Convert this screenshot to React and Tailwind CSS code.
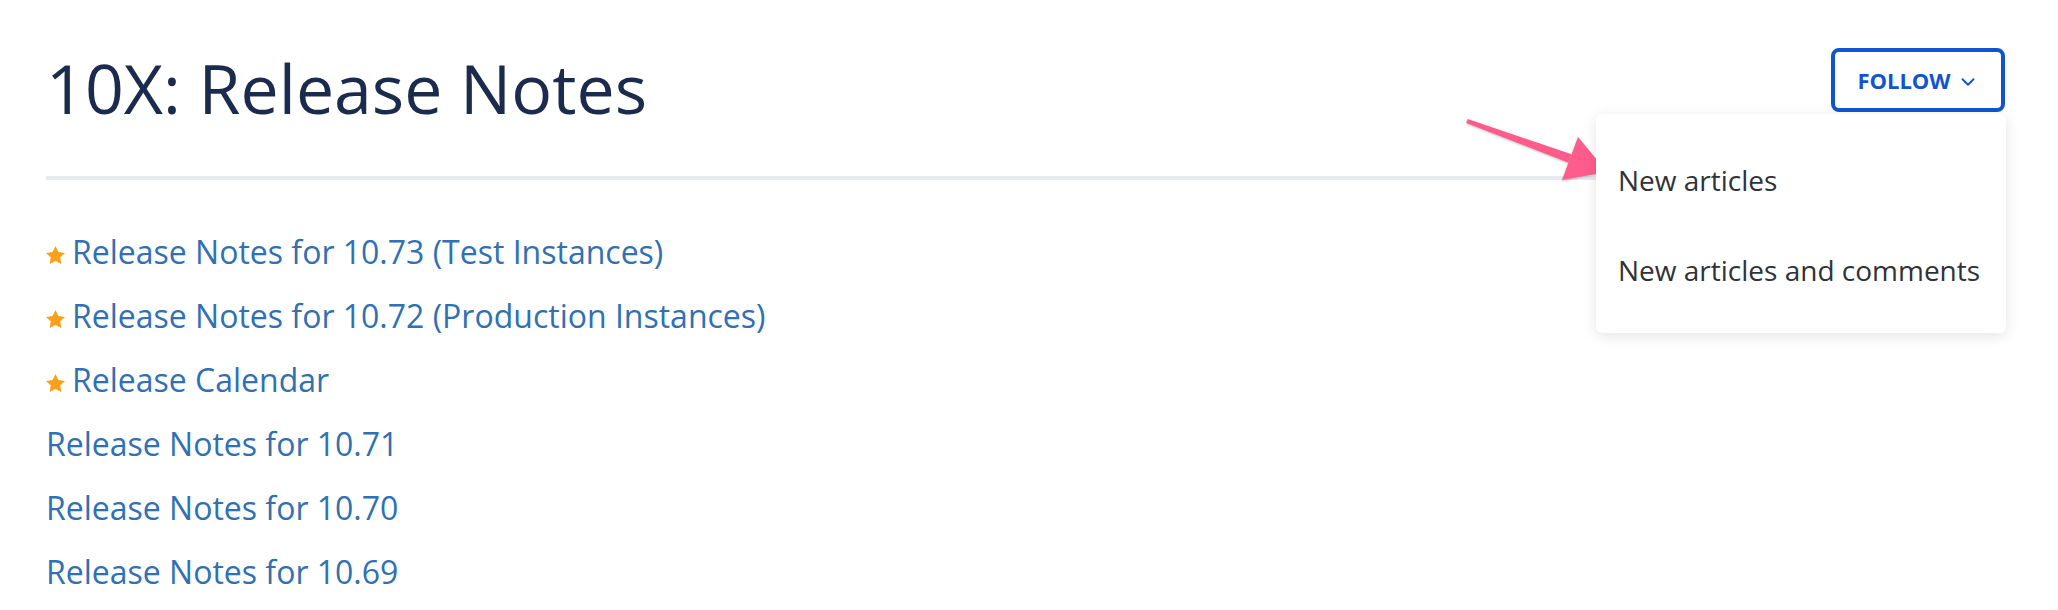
import { ChevronDown } from 'lucide-react';

const links = [
  { title: 'Release Notes for 10.73 (Test Instances)', promoted: true },
  { title: 'Release Notes for 10.72 (Production Instances)', promoted: true },
  { title: 'Release Calendar', promoted: true },
  { title: 'Release Notes for 10.71' },
  { title: 'Release Notes for 10.70' },
  { title: 'Release Notes for 10.69' },
];

function Star() {
  return (
    <svg
      viewBox="2 2 20 19"
      width="19"
      height="18"
      className="inline-block align-baseline mr-[7px]"
      fill="#f9a11b"
    >
      <path d="M12 2l3.09 6.26L22 9.27l-5 4.87 1.18 6.88L12 17.77l-6.18 3.25L7 14.14 2 9.27l6.91-1.01L12 2z" />
    </svg>
  );
}

function PinkArrow() {
  return (
    <svg
      width="160"
      height="80"
      viewBox="0 0 160 80"
      className="absolute left-[1460px] top-[110px] pointer-events-none"
    >
      <g fill="#ff5c8d" style={{ filter: 'drop-shadow(0 1px 1px rgba(0,0,0,0.25))' }}>
        <polygon points="7.7,9.1 111.5,44.3 108.5,52.7 6.3,12.9" />
        <polygon points="118,27 147,62 102,70" />
      </g>
    </svg>
  );
}

function FollowMenu() {
  return (
    <div className="relative mt-[1px]">
      <button className="w-[174px] h-[64px] flex items-center justify-center gap-[6px] border-[4px] border-[#0f55cf] rounded-[8px] bg-white text-[#0f55cf] font-bold text-[22px] leading-none">
        FOLLOW
        <ChevronDown size={22} strokeWidth={2} className="mt-[3px]" />
      </button>
      <div className="absolute right-[-1px] top-[66px] w-[410px] bg-white rounded-[6px] shadow-[0_3px_14px_rgba(0,0,0,0.11)] pt-[21px] pb-[18px] z-10">
        <div className="h-[90px] flex items-center pl-[22px] text-[28px] text-[#2f3337]">
          New articles
        </div>
        <div className="h-[90px] flex items-center pl-[22px] text-[28px] text-[#2f3337]">
          New articles and comments
        </div>
      </div>
    </div>
  );
}

export default function App() {
  return (
    <div className="relative min-h-[610px] bg-white font-['Open_Sans',sans-serif] pl-[46px] pr-[53px] pt-[47px]">
      <div className="flex items-start justify-between">
        <h1 className="text-[68px] leading-[82px] text-[#1b2b4d] font-normal">
          10X: Release Notes
        </h1>
        <FollowMenu />
      </div>

      <div className="mt-[47px] h-[4px] bg-[#e9eaf0]" />

      <ul className="mt-[40px]">
        {links.map((link) => (
          <li key={link.title} className="h-[64px] leading-[64px] text-[32px]">
            <a href="#" className="text-[#3070b3]">
              {link.promoted && <Star />}
              {link.title}
            </a>
          </li>
        ))}
      </ul>

      <PinkArrow />
    </div>
  );
}
